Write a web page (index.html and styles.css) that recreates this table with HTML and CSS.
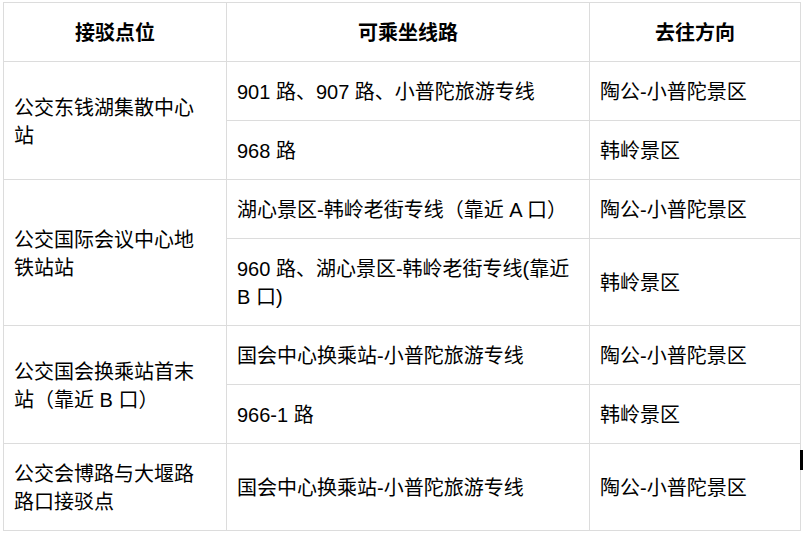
FILE: index.html
```html
<!DOCTYPE html>
<html lang="zh-CN">
<head>
<meta charset="utf-8">
<title>接驳点位</title>
<link rel="stylesheet" href="styles.css">
</head>
<body>
<table class="routes">
  <colgroup>
    <col class="c1">
    <col class="c2">
    <col class="c3">
  </colgroup>
  <thead>
    <tr>
      <th>接驳点位</th>
      <th>可乘坐线路</th>
      <th>去往方向</th>
    </tr>
  </thead>
  <tbody>
    <tr>
      <td class="stop" rowspan="2">公交东钱湖集散中心站</td>
      <td>901 路、907 路、小普陀旅游专线</td>
      <td>陶公-小普陀景区</td>
    </tr>
    <tr>
      <td>968 路</td>
      <td>韩岭景区</td>
    </tr>
    <tr>
      <td class="stop" rowspan="2">公交国际会议中心地铁站站</td>
      <td>湖心景区-韩岭老街专线（靠近 A 口）</td>
      <td>陶公-小普陀景区</td>
    </tr>
    <tr>
      <td>960 路、湖心景区-韩岭老街专线(靠近 B 口)</td>
      <td>韩岭景区</td>
    </tr>
    <tr>
      <td class="stop" rowspan="2">公交国会换乘站首末站（靠近 B 口）</td>
      <td>国会中心换乘站-小普陀旅游专线</td>
      <td>陶公-小普陀景区</td>
    </tr>
    <tr>
      <td>966-1 路</td>
      <td>韩岭景区</td>
    </tr>
    <tr>
      <td class="stop">公交会博路与大堰路路口接驳点</td>
      <td>国会中心换乘站-小普陀旅游专线</td>
      <td>陶公-小普陀景区</td>
    </tr>
  </tbody>
</table>
<div class="caret"></div>
</body>
</html>
```

FILE: styles.css
```css
html, body {
  margin: 0;
  padding: 0;
  background: #fff;
}

body {
  padding: 2px 0 0 3px;
  font-family: "Liberation Sans", "Noto Sans CJK SC", sans-serif;
  font-size: 20px;
  color: #000;
}

.routes {
  border-collapse: collapse;
  table-layout: fixed;
  width: 797px;
}

.c1 { width: 223px; }
.c2 { width: 363px; }
.c3 { width: 211px; }

.routes th,
.routes td {
  border: 1px solid #dcdcdc;
  padding: 16px 10px 14px;
  line-height: 28px;
  vertical-align: middle;
  text-align: left;
  font-weight: normal;
}

.routes th {
  text-align: center;
  font-weight: bold;
}

.routes td.stop {
  padding-right: 16px;
}

.caret {
  position: absolute;
  left: 800px;
  top: 450px;
  width: 3px;
  height: 20px;
  background: #000;
}
```
